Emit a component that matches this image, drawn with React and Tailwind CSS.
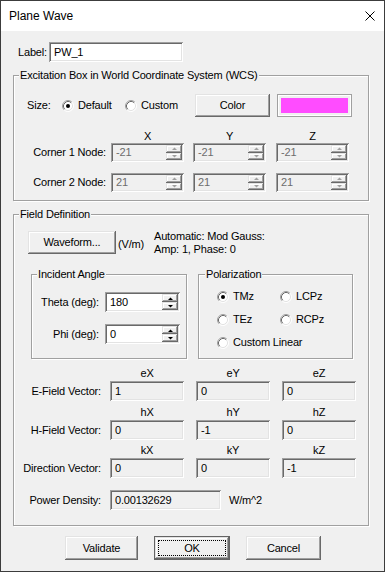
import React from "react";

const raised =
  "shadow-[inset_-1px_-1px_0_#696969,inset_1px_1px_0_#e3e3e3,inset_-2px_-2px_0_#a0a0a0,inset_2px_2px_0_#ffffff]";
const sunken =
  "shadow-[inset_1px_1px_0_#a0a0a0,inset_-1px_-1px_0_#ffffff,inset_2px_2px_0_#696969,inset_-2px_-2px_0_#e3e3e3]";
const etched =
  "border border-[#a0a0a0] shadow-[inset_1px_1px_0_#ffffff,1px_1px_0_#ffffff]";

function Arrow({ up, disabled }) {
  return (
    <svg width="5" height="3" viewBox="0 0 5 3">
      <polygon
        points={up ? "0,3 5,3 2.5,0.5" : "0,0 5,0 2.5,2.5"}
        fill={disabled ? "#a0a0a0" : "#000"}
      />
    </svg>
  );
}

function Edit({ className = "", value, kind = "white", spin = false }) {
  const bg = kind === "white" ? "bg-white" : "bg-[#f0f0f0]";
  const fg = kind === "disabled" ? "text-[#6d6d6d]" : "text-black";
  return (
    <div className={`flex items-stretch ${bg} ${sunken} ${className}`}>
      <div className={`flex-1 flex items-center pl-[5px] ${fg}`}>{value}</div>
      {spin && (
        <div className="flex flex-col w-[16px] my-[2px] mr-[2px]">
          <div className={`flex-1 flex items-center justify-center bg-[#f0f0f0] ${raised}`}>
            <Arrow up disabled={kind === "disabled"} />
          </div>
          <div className={`flex-1 flex items-center justify-center bg-[#f0f0f0] ${raised}`}>
            <Arrow disabled={kind === "disabled"} />
          </div>
        </div>
      )}
    </div>
  );
}

function Button({ className = "", children, isDefault = false }) {
  if (isDefault) {
    return (
      <div className={`flex border border-[#646464] bg-[#f0f0f0] ${className}`}>
        <div className={`flex-1 flex p-[3px] ${raised}`}>
          <div className="flex-1 flex items-center justify-center border border-dotted border-black">
            {children}
          </div>
        </div>
      </div>
    );
  }
  return (
    <div className={`flex items-center justify-center bg-[#f0f0f0] ${raised} ${className}`}>
      {children}
    </div>
  );
}

function RadioDot({ checked }) {
  return (
    <svg width="12" height="12" viewBox="0 0 12 12" className="shrink-0">
      <circle cx="6" cy="6" r="5" fill="#fff" />
      <path d="M2.11 9.89 A5.5 5.5 0 0 1 9.89 2.11" stroke="#a0a0a0" fill="none" />
      <path d="M9.89 2.11 A5.5 5.5 0 0 1 2.11 9.89" stroke="#fff" fill="none" />
      <path d="M2.82 9.18 A4.5 4.5 0 0 1 9.18 2.82" stroke="#696969" fill="none" />
      <path d="M9.18 2.82 A4.5 4.5 0 0 1 2.82 9.18" stroke="#e3e3e3" fill="none" />
      {checked && <circle cx="6" cy="6" r="2" fill="#000" />}
    </svg>
  );
}

function Radio({ checked, label, className = "" }) {
  return (
    <div className={`flex items-center h-[13px] ${className}`}>
      <RadioDot checked={checked} />
      <span className="ml-[4px]">{label}</span>
    </div>
  );
}

function Legend({ children, ml = "ml-[5px]" }) {
  return (
    <span className={`self-start -mt-[7px] ${ml} px-[1px] bg-[#f0f0f0] h-[13px]`}>{children}</span>
  );
}

function CornerRow({ label, values, className = "" }) {
  return (
    <div className={`flex items-center h-[19px] ${className}`}>
      <span className="w-[97px] pr-[5px] text-right">{label}</span>
      <Edit className="w-[73px] h-[19px]" value={values[0]} kind="disabled" spin />
      <Edit className="w-[73px] h-[19px] ml-[9px]" value={values[1]} kind="disabled" spin />
      <Edit className="w-[73px] h-[19px] ml-[10px]" value={values[2]} kind="disabled" spin />
    </div>
  );
}

function VectorBlock({ heads, label, values, className = "" }) {
  return (
    <div className={`flex flex-col ${className}`}>
      <div className="flex h-[13px]">
        <span className="w-[96px]" />
        {heads.map((h, i) => (
          <span key={h} className={`w-[74px] text-center ${i > 0 ? "ml-[12px]" : ""}`}>
            {h}
          </span>
        ))}
      </div>
      <div className="flex items-center h-[20px] mt-[1px]">
        <span className="w-[96px] pr-[9px] text-right">{label}</span>
        {values.map((v, i) => (
          <Edit
            key={i}
            className={`w-[74px] h-[20px] ${i > 0 ? "ml-[12px]" : ""}`}
            value={v}
            kind="readonly"
          />
        ))}
      </div>
    </div>
  );
}

export default function App() {
  return (
    <div className="w-[385px] h-[572px] border border-[#3c3c3c] bg-[#f0f0f0] flex flex-col font-['Liberation_Sans',Arial,sans-serif] text-[11px] leading-[13px] tracking-[-0.17px] text-black overflow-hidden">
      {/* title bar */}
      <div className="h-[30px] bg-white flex items-center justify-between pl-[8px] pr-[9px] shrink-0">
        <span className="text-[12px] tracking-normal">Plane Wave</span>
        <svg width="10" height="10" viewBox="0 0 10 10">
          <path d="M0.5 0.5 L9.5 9.5 M9.5 0.5 L0.5 9.5" stroke="#000" strokeWidth="1" />
        </svg>
      </div>

      {/* label */}
      <div className="flex items-center mt-[11px] ml-[17px]">
        <span className="w-[31px]">Label:</span>
        <Edit className="w-[134px] h-[20px]" value="PW_1" />
      </div>

      {/* excitation box */}
      <div className={`flex flex-col mt-[13px] ml-[12px] w-[356px] h-[126px] shrink-0 ${etched}`}>
        <Legend>Excitation Box in World Coordinate System (WCS)</Legend>
        <div className="flex items-center mt-[12px] h-[23px]">
          <span className="ml-[13px] w-[35px]">Size:</span>
          <Radio checked label="Default" className="w-[63px]" />
          <Radio label="Custom" className="w-[70px]" />
          <Button className="w-[75px] h-[23px]">Color</Button>
          <div className="ml-[7px] w-[75px] h-[23px] p-[4px] bg-[#f0f0f0] shadow-[inset_1px_1px_0_#a0a0a0,inset_-1px_-1px_0_#a0a0a0,inset_2px_2px_0_#ffffff,inset_-2px_-2px_0_#ffffff]">
            <div className="w-full h-full bg-[#ff4cff]" />
          </div>
        </div>
        <div className="flex h-[13px] mt-[13px]">
          <span className="w-[97px]" />
          <span className="w-[73px] text-center">X</span>
          <span className="w-[73px] ml-[9px] text-center">Y</span>
          <span className="w-[73px] ml-[10px] text-center">Z</span>
        </div>
        <CornerRow label="Corner 1 Node:" values={["-21", "-21", "-21"]} />
        <CornerRow label="Corner 2 Node:" values={["21", "21", "21"]} className="mt-[11px]" />
      </div>

      {/* field definition */}
      <div className={`flex flex-col mt-[13px] ml-[12px] w-[356px] h-[312px] shrink-0 ${etched}`}>
        <Legend>Field Definition</Legend>
        <div className="flex items-start mt-[10px] h-[23px]">
          <Button className="ml-[14px] w-[88px] h-[23px]">Waveform...</Button>
          <span className="ml-[2px] w-[36px] mt-[7px]">(V/m)</span>
          <div className="flex flex-col -mt-[1px]">
            <span>Automatic: Mod Gauss:</span>
            <span>Amp: 1, Phase: 0</span>
          </div>
        </div>

        <div className="flex mt-[20px]">
          <div className={`flex flex-col ml-[17px] w-[156px] h-[85px] ${etched}`}>
            <Legend>Incident Angle</Legend>
            <div className="flex items-center mt-[11px]">
              <span className="w-[73px] pr-[6px] text-right">Theta (deg):</span>
              <Edit className="w-[75px] h-[20px]" value="180" spin />
            </div>
            <div className="flex items-center mt-[12px]">
              <span className="w-[73px] pr-[6px] text-right">Phi (deg):</span>
              <Edit className="w-[75px] h-[20px]" value="0" spin />
            </div>
          </div>

          <div className={`flex flex-col ml-[11px] w-[155px] h-[85px] ${etched}`}>
            <Legend ml="ml-[6px]">Polarization</Legend>
            <div className="flex mt-[9px] ml-[18px]">
              <Radio checked label="TMz" className="w-[63px]" />
              <Radio label="LCPz" />
            </div>
            <div className="flex mt-[10px] ml-[18px]">
              <Radio label="TEz" className="w-[63px]" />
              <Radio label="RCPz" />
            </div>
            <div className="flex mt-[10px] ml-[18px]">
              <Radio label="Custom Linear" />
            </div>
          </div>
        </div>

        <VectorBlock
          className="mt-[8px]"
          heads={["eX", "eY", "eZ"]}
          label="E-Field Vector:"
          values={["1", "0", "0"]}
        />
        <VectorBlock
          className="mt-[5px]"
          heads={["hX", "hY", "hZ"]}
          label="H-Field Vector:"
          values={["0", "-1", "0"]}
        />
        <VectorBlock
          className="mt-[4px]"
          heads={["kX", "kY", "kZ"]}
          label="Direction Vector:"
          values={["0", "0", "-1"]}
        />

        <div className="flex items-center mt-[12px]">
          <span className="w-[96px] pr-[9px] text-right">Power Density:</span>
          <Edit className="w-[111px] h-[20px]" value="0.00132629" kind="readonly" />
          <span className="ml-[8px]">W/m^2</span>
        </div>
      </div>

      {/* buttons */}
      <div className="flex mt-[10px] ml-[64px]">
        <Button className="w-[73px] h-[24px]">Validate</Button>
        <Button isDefault className="ml-[16px] w-[76px] h-[24px]">OK</Button>
        <Button className="ml-[16px] w-[75px] h-[24px]">Cancel</Button>
      </div>
    </div>
  );
}
